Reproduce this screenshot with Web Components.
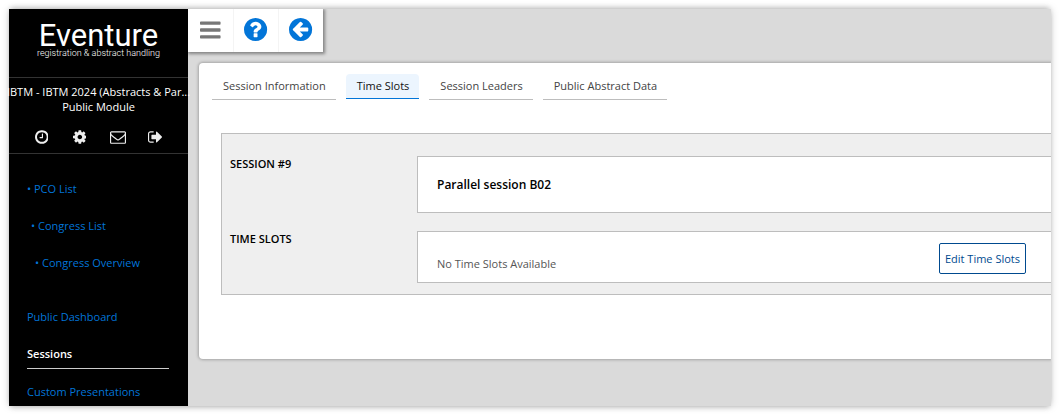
<!DOCTYPE html>
<html lang="en">
<head>
<meta charset="utf-8">
<meta name="viewport" content="width=device-width, initial-scale=1">
<title>Eventure - Time Slots</title>
<style>
  :root {
    --ev-link: #0275d8;
    --ev-line: #bdbdbd;
    --ev-page: #dadada;
    --ev-navy: #004a8f;
  }
  * { box-sizing: border-box; }
  body {
    margin: 0;
    min-height: 100vh;
    display: flex;
    background: #fff;
    font: 500 11px/16px "Open Sans", "Noto Sans", sans-serif;
    color: #000;
  }
</style>
</head>
<body>
<ev-shell>
  <ev-sidebar slot="sidebar">
    <ev-logo slot="logo"></ev-logo>
    <ev-account slot="account" congress="IBTM - IBTM 2024 (Abstracts &amp; Par..." module="Public Module"></ev-account>
    <ev-nav label="Congress">
      <ev-nav-link bullet level="0">PCO List</ev-nav-link>
      <ev-nav-link bullet level="1">Congress List</ev-nav-link>
      <ev-nav-link bullet level="2">Congress Overview</ev-nav-link>
    </ev-nav>
    <ev-nav label="Module">
      <ev-nav-link>Public Dashboard</ev-nav-link>
      <ev-nav-link current>Sessions</ev-nav-link>
      <ev-nav-link>Custom Presentations</ev-nav-link>
    </ev-nav>
  </ev-sidebar>
  <ev-toolbar></ev-toolbar>
  <ev-card>
    <ev-tabs slot="tabs">
      <ev-tab>Session Information</ev-tab>
      <ev-tab current>Time Slots</ev-tab>
      <ev-tab>Session Leaders</ev-tab>
      <ev-tab>Public Abstract Data</ev-tab>
    </ev-tabs>
    <ev-panel>
      <ev-field label="SESSION #9" strong>Parallel session B02</ev-field>
      <ev-field label="TIME SLOTS">No Time Slots Available
        <ev-button slot="action">Edit Time Slots</ev-button>
      </ev-field>
    </ev-panel>
  </ev-card>
</ev-shell>

<script>
// Outer ring shared by the two round toolbar icons and the clock
const DISC = 'M1536 896q0 209-103 385.5t-279.5 279.5-385.5 103-385.5-103-279.5-279.5-103-385.5 103-385.5 279.5-279.5 385.5-103 385.5 103 279.5 279.5 103 385.5z';

// name: [width in font units, path]
const ICONS = {
  clock: [1536, 'M896 544v448q0 14-9 23t-23 9h-320q-14 0-23-9t-9-23v-64q0-14 9-23t23-9h224v-352q0-14 9-23t23-9h64q14 0 23 9t9 23zM1312 896q0-148-73-273t-198-198-273-73-273 73-198 198-73 273 73 273 198 198 273 73 273-73 198-198 73-273z' + DISC],
  cog: [1536, 'M1024 896q0-106-75-181t-181-75-181 75-75 181 75 181 181 75 181-75 75-181zM1536 787v222q0 12-8 23t-20 13l-185 28q-19 54-39 91 35 50 107 138 10 12 10 25t-9 23q-27 37-99 108t-94 71q-12 0-26-9l-138-108q-44 23-91 38-16 136-29 186-7 28-36 28h-222q-14 0-24.5-8.5t-11.5-21.5l-28-184q-49-16-90-37l-141 107q-10 9-25 9-14 0-25-11-126-114-165-168-7-10-7-23 0-12 8-23 15-21 51-66.5t54-70.5q-27-50-41-99l-183-27q-13-2-21-12.5t-8-23.5v-222q0-12 8-23t19-13l186-28q14-46 39-92-40-57-107-138-10-12-10-24 0-10 9-23 26-36 98.5-107.5t94.5-71.5q13 0 26 10l138 107q44-23 91-38 16-136 29-186 7-28 36-28h222q14 0 24.5 8.5t11.5 21.5l28 184q49 16 90 37l142-107q9-9 24-9 13 0 25 10 129 119 165 170 7 8 7 22 0 12-8 23-15 21-51 66.5t-54 70.5q26 50 41 98l183 28q13 2 21 12.5t8 23.5z'],
  mail: [1792, 'M1664 1504v-768q-32 36-69 66-268 206-426 338-51 43-83 67t-86.5 48.5-102.5 24.5h-2q-48 0-102.5-24.5t-86.5-48.5-83-67q-158-132-426-338-37-30-69-66v768q0 13 9.5 22.5t22.5 9.5h1472q13 0 22.5-9.5t9.5-22.5zM1664 453v-24.5t-.5-13-3-12.5-5.5-9-9-7.5-14-2.5h-1472q-13 0-22.5 9.5t-9.5 22.5q0 168 147 284 193 152 401 317 6 5 35 29.5t46 37.5 44.5 31.5 50.5 27.5 43 9h2q20 0 43-9t50.5-27.5 44.5-31.5 46-37.5 35-29.5q208-165 401-317 54-43 100.5-115.5t46.5-131.5zM1792 416v1088q0 66-47 113t-113 47h-1472q-66 0-113-47t-47-113v-1088q0-66 47-113t113-47h1472q66 0 113 47t47 113z'],
  exit: [1664, 'M640 1440q0 4 1 20t.5 26.5-3 23.5-10 19.5-20.5 6.5h-320q-119 0-203.5-84.5t-84.5-203.5v-704q0-119 84.5-203.5t203.5-84.5h320q13 0 22.5 9.5t9.5 22.5q0 4 1 20t.5 26.5-3 23.5-10 19.5-20.5 6.5h-320q-66 0-113 47t-47 113v704q0 66 47 113t113 47h312l11.5 1 11.5 3 8 5.5 7 9 2 13.5zM1568 896q0 26-19 45l-544 544q-19 19-45 19t-45-19-19-45v-288h-448q-26 0-45-19t-19-45v-384q0-26 19-45t45-19h448v-288q0-26 19-45t45-19 45 19l544 544q19 19 19 45z'],
  bars: [1536, [1344, 832, 320].map((y) => `M1536 ${y}v128q0 26-19 45t-45 19h-1408q-26 0-45-19t-19-45v-128q0-26 19-45t45-19h1408q26 0 45 19t19 45z`).join('')],
  help: [1536, 'M896 1376v-192q0-14-9-23t-23-9h-192q-14 0-23 9t-9 23v192q0 14 9 23t23 9h192q14 0 23-9t9-23zM1152 704q0-88-55.5-163t-138.5-116-170-41q-243 0-371 213-15 24 8 42l132 100q7 6 19 6 16 0 25-12 53-68 86-92 34-24 86-24 48 0 85.5 26t37.5 59q0 38-20 61t-68 45q-63 28-115.5 86.5t-52.5 125.5v36q0 14 9 23t23 9h192q14 0 23-9t9-23q0-19 21.5-49.5t54.5-49.5q32-18 49-28.5t46-35 44.5-48 28-60.5 12.5-81z' + DISC],
  back: [1536, 'M1280 960v-128q0-26-19-45t-45-19h-502l189-189q19-19 19-45t-19-45l-91-91q-18-18-45-18t-45 18l-362 362-91 91q-18 18-18 45t18 45l91 91 362 362q18 18 45 18t45-18l91-91q18-18 18-45t-18-45l-189-189h502q26 0 45-19t19-45z' + DISC],
};

const icon = (name, size) => {
  const [w, d] = ICONS[name];
  return `<svg viewBox="0 0 ${w} 1792" height="${size}" fill="currentColor" fill-rule="evenodd" aria-hidden="true"><path d="${d}"/></svg>`;
};

const RESET = `
  *, :host { box-sizing: border-box; }
  button { margin: 0; padding: 0; border: 0; background: none; font: inherit; color: inherit; cursor: pointer; }
  svg { display: block; }
`;

// Registers an element whose shadow root is built once from render(host)
function define(name, css, render) {
  customElements.define(name, class extends HTMLElement {
    constructor() {
      super();
      this.attachShadow({ mode: 'open' });
    }
    connectedCallback() {
      this.shadowRoot.innerHTML = `<style>${RESET}${css}</style>${render(this)}`;
    }
  });
}

define('ev-shell', `
  :host {
    flex: 1;
    display: grid;
    grid-template-columns: 179px minmax(0, 1fr);
    margin: 9px 8px 8px 9px;
    background: var(--ev-page);
    box-shadow: 0 0 8px rgba(0, 0, 0, 0.18), 0 -3px 5px -2px rgba(0, 0, 0, 0.2), 0 3px 5px -2px rgba(0, 0, 0, 0.2);
  }
  main { display: flex; flex-direction: column; align-items: flex-start; overflow: hidden; }
  ::slotted(ev-card) { align-self: stretch; }
`, () => `<slot name="sidebar"></slot><main><slot></slot></main>`);

define('ev-sidebar', `
  :host { display: block; background: #000; color: #fff; }
  .menu { display: grid; gap: 25px; padding: 20px 19px 0 18px; }
`, () => `
  <slot name="logo"></slot>
  <slot name="account"></slot>
  <div class="menu"><slot></slot></div>
`);

define('ev-logo', `
  :host {
    display: block;
    height: 69px;
    padding-top: 12px;
    border-bottom: 1px solid #333;
    font-family: Roboto, sans-serif;
    text-align: center;
    white-space: nowrap;
  }
  .name { font-size: 31px; font-weight: 400; line-height: 30px; }
  .tag { font-size: 9px; font-weight: 300; line-height: 9px; margin-top: -2px; }
`, () => `<div class="name">Eventure</div><div class="tag">registration &amp; abstract handling</div>`);

define('ev-account', `
  :host {
    display: block;
    padding: 6px 0 8px;
    border-bottom: 1px solid #333;
    line-height: 15px;
    text-align: center;
  }
  .congress { display: flex; justify-content: center; white-space: nowrap; }
  .tools { display: grid; grid-template-columns: repeat(4, 38px); justify-content: center; margin-top: 15px; color: #eee; }
  button { display: flex; justify-content: center; }
`, (el) => `
  <div class="congress">${el.getAttribute('congress').replace('&', '&amp;')}</div>
  <div>${el.getAttribute('module')}</div>
  <div class="tools">
    <button type="button" aria-label="History">${icon('clock', 16)}</button>
    <button type="button" aria-label="Settings">${icon('cog', 16)}</button>
    <button type="button" aria-label="Messages">${icon('mail', 16)}</button>
    <button type="button" aria-label="Log out">${icon('exit', 16)}</button>
  </div>
`);

define('ev-nav', `
  :host { display: block; }
  nav { display: grid; gap: 8px; }
`, (el) => `<nav aria-label="${el.getAttribute('label')}"><slot></slot></nav>`);

define('ev-nav-link', `
  :host { display: block; }
  a {
    display: block;
    line-height: 29px;
    color: var(--ev-link);
    text-decoration: none;
    white-space: nowrap;
  }
  :host([level="1"]) { padding-left: 4px; }
  :host([level="2"]) { padding-left: 8px; }
  :host([current]) a { color: #fff; font-weight: 600; border-bottom: 1px solid #ccc; }
`, (el) => `<a href="#"${el.hasAttribute('current') ? ' aria-current="page"' : ''}>${el.hasAttribute('bullet') ? '• ' : ''}<slot></slot></a>`);

define('ev-toolbar', `
  :host { display: flex; background: #fff; box-shadow: 1px 1px 3px 1px rgba(0, 0, 0, 0.4); }
  button {
    display: flex;
    align-items: center;
    justify-content: center;
    width: 45px;
    height: 43px;
    padding-bottom: 2px;
    color: var(--ev-link);
  }
  button + button { border-left: 1px solid #f4f4f4; }
  .menu { color: #777; }
`, () => `
  <button type="button" class="menu" aria-label="Menu">${icon('bars', 24)}</button>
  <button type="button" aria-label="Help">${icon('help', 27)}</button>
  <button type="button" aria-label="Back">${icon('back', 27)}</button>
`);

define('ev-card', `
  :host {
    display: block;
    margin: 11px 0 0 11px;
    padding: 11px 0 64px 13px;
    background: #fff;
    border-radius: 4px 0 0 4px;
    box-shadow: 0 0 3px 1px rgba(0, 0, 0, 0.25);
  }
`, () => `<slot name="tabs"></slot><slot></slot>`);

define('ev-tabs', `
  :host { display: block; }
  nav { display: flex; align-items: flex-start; gap: 10px; }
`, () => `<nav aria-label="Session"><slot></slot></nav>`);

define('ev-tab', `
  :host { display: block; }
  a {
    display: block;
    padding: 4px 10px 5px 11px;
    border-bottom: 1px solid var(--ev-line);
    color: #444;
    line-height: 16px;
    text-decoration: none;
    white-space: nowrap;
  }
  :host([current]) a {
    background: #ecf5fe;
    border-color: var(--ev-link);
    border-radius: 4px 4px 0 0;
    color: #111;
    line-height: 15px;
  }
`, (el) => `<a href="#"${el.hasAttribute('current') ? ' aria-current="page"' : ''}><slot></slot></a>`);

define('ev-panel', `
  :host {
    display: grid;
    gap: 18px;
    margin: 33px 0 0 9px;
    padding: 22px 0 11px 8px;
    background: #efefef;
    border: 1px solid var(--ev-line);
    border-right: 0;
  }
`, () => `<slot></slot>`);

define('ev-field', `
  :host {
    display: grid;
    grid-template-columns: 187px minmax(0, 1fr);
    color: #555;
    font-weight: 400;
    line-height: 15px;
  }
  .label { color: #000; font-weight: 600; }
  .box {
    display: flex;
    align-items: center;
    justify-content: space-between;
    padding: 11px 25px 8px 19px;
    background: #fff;
    border: 1px solid var(--ev-line);
    border-right: 0;
  }
  .value { padding-top: 10px; }
  :host([strong]) .box { padding: 20px 19px; }
  :host([strong]) .value { padding: 0; color: #000; font-size: 12px; font-weight: 600; }
`, (el) => `
  <div class="label" id="label">${el.getAttribute('label')}</div>
  <div class="box" role="group" aria-labelledby="label">
    <div class="value"><slot></slot></div>
    <slot name="action"></slot>
  </div>
`);

define('ev-button', `
  :host { display: block; }
  button {
    padding: 7px 5px;
    border: 1px solid var(--ev-navy);
    border-radius: 2px;
    background: #fff;
    color: var(--ev-navy);
    line-height: 15px;
    white-space: nowrap;
  }
`, () => `<button type="button"><slot></slot></button>`);
</script>
</body>
</html>
